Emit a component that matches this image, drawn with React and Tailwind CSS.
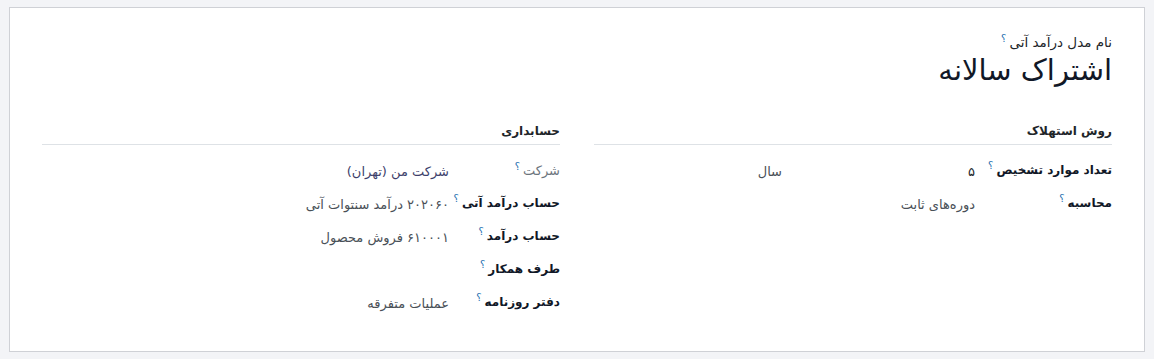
import React from 'react';

const Help = () => <sup className="text-[#1f6fb0] text-[10px] mr-[3px] font-normal">؟</sup>;

const Row = ({ label, value, muted, labelW, valueClass = 'text-[#495057]', children }) => (
  <div className="flex items-start h-[33px]">
    <div className={`${labelW} shrink-0 whitespace-nowrap ${muted ? 'text-[13px] text-[#6c757d] font-normal' : 'text-[12px] text-[#111827] font-semibold'}`}>
      {label}
      <Help />
    </div>
    <div className={`text-[13px] pt-[1px] whitespace-nowrap ${valueClass}`}>{children || value}</div>
  </div>
);

const Section = ({ title, children }) => (
  <div className="flex-1">
    <div className="text-[12px] font-semibold text-[#212529] pb-[4px] border-b border-[#dee2e6] mb-[16px]">{title}</div>
    {children}
  </div>
);

export default function App() {
  return (
    <div dir="rtl" className="min-h-screen bg-[#f3f4f7] pt-[7px] px-[9px] pb-[7px]" style={{ fontFamily: '"DejaVu Sans", "Noto Sans", sans-serif' }}>
      <div className="bg-white border border-[#cfd1d6] h-[345px] pr-[32px] pl-[32px] pt-[24px]">
        <div className="text-[13.5px] text-[#212529]">
          نام مدل درآمد آتی
          <Help />
        </div>
        <h1 className="text-[29px] leading-[36px] text-[#111827]">اشتراک سالانه</h1>

        <div className="flex gap-[34px] mt-[34px]">
          <Section title="روش استهلاک">
            <Row label="تعداد موارد تشخیص" labelW="w-[137px]">
              <div className="flex">
                <span className="w-[193px] text-[#212529]">۵</span>
                <span>سال</span>
              </div>
            </Row>
            <Row label="محاسبه" labelW="w-[137px]" value="دوره‌های ثابت" />
          </Section>
          <Section title="حسابداری">
            <Row label="شرکت" muted labelW="w-[111px]" value="شرکت من (تهران)" valueClass="text-[#3d3f6b]" />
            <Row label="حساب درآمد آتی" labelW="w-[111px]" value="۲۰۲۰۶۰ درآمد سنتوات آتی" />
            <Row label="حساب درآمد" labelW="w-[111px]" value="۶۱۰۰۰۱ فروش محصول" />
            <Row label="طرف همکار" labelW="w-[111px]" value="" />
            <Row label="دفتر روزنامه" labelW="w-[111px]" value="عملیات متفرقه" />
          </Section>
        </div>
      </div>
    </div>
  );
}
